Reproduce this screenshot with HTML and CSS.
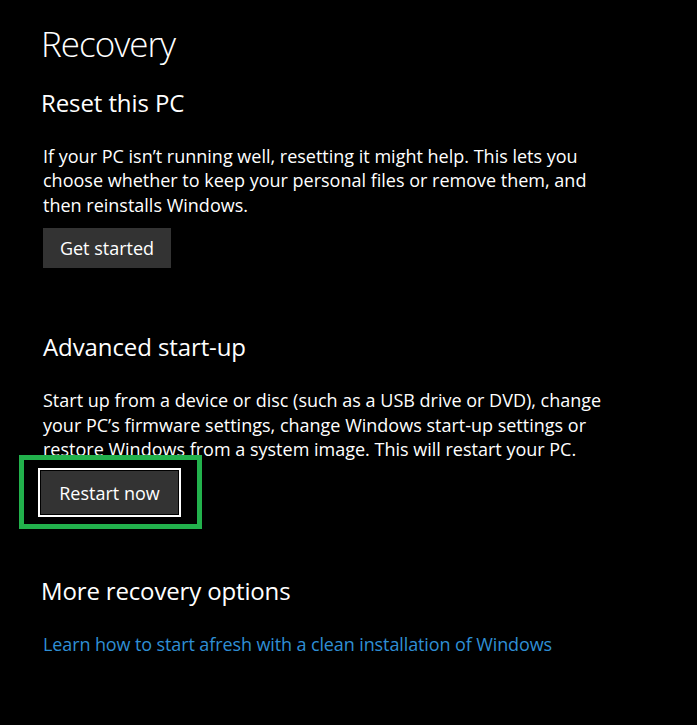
FILE: index.html
```html
<!DOCTYPE html>
<html lang="en">
<head>
<meta charset="utf-8">
<title>Recovery</title>
<link rel="stylesheet" href="styles.css">
</head>
<body>
<main class="page">
  <h1 class="title">Recovery</h1>

  <section class="section">
    <h2 class="heading heading-first">Reset this PC</h2>
    <p class="text">If your PC isn’t running well, resetting it might help. This lets you choose whether to keep your personal files or remove them, and then reinstalls Windows.</p>
    <button class="btn btn-get">Get started</button>
  </section>

  <section class="section">
    <h2 class="heading heading-adv">Advanced start-up</h2>
    <p class="text">Start up from a device or disc (such as a USB drive or DVD), change your PC’s firmware settings, change Windows start-up settings or restore Windows from a system image. This will restart your PC.</p>
    <div class="focus-wrap">
      <button class="btn btn-focus">Restart now</button>
      <span class="highlight"></span>
    </div>
  </section>

  <section class="section">
    <h2 class="heading heading-more">More recovery options</h2>
    <a class="link" href="#">Learn how to start afresh with a clean installation of Windows</a>
  </section>
</main>
</body>
</html>
```

FILE: styles.css
```css
html, body {
  margin: 0;
  padding: 0;
  background: #000;
  color: #fff;
  font-family: "Open Sans", "Noto Sans", sans-serif;
}

.page {
  width: 697px;
  height: 725px;
  padding: 19px 0 0 41px;
  box-sizing: border-box;
  overflow: hidden;
}

.title {
  margin: 0;
  font-size: 35px;
  font-weight: 300;
  line-height: 50px;
  letter-spacing: -1px;
}

.section {
  display: flex;
  flex-direction: column;
  align-items: flex-start;
}

.heading {
  margin: 0;
  font-size: 24px;
  font-weight: 400;
  line-height: 34px;
  letter-spacing: -0.1px;
}

.heading-first {
  margin-top: 17px;
}

.heading-adv {
  margin-top: 62px;
  margin-left: 2px;
}

.heading-more {
  margin-top: 57px;
  letter-spacing: -0.15px;
}

.text {
  margin: 24px 0 0 2px;
  width: 560px;
  font-size: 18px;
  line-height: 24.4px;
}

.btn {
  display: block;
  height: 40px;
  padding: 0;
  border: 0;
  background: #333;
  color: #fff;
  font-family: inherit;
  font-size: 18px;
  text-align: center;
}

.btn-get {
  width: 128px;
  margin: 11px 0 0 2px;
}

.focus-wrap {
  position: relative;
  margin: 7px 0 0 -3px;
}

.btn-focus {
  width: 143px;
  height: 49px;
  border: 2px solid #fff;
  box-shadow: inset 0 0 0 1px #000;
}

.highlight {
  position: absolute;
  left: -19px;
  top: -13px;
  right: -21px;
  bottom: -12px;
  border: 5px solid #22b14c;
  pointer-events: none;
}

.link {
  display: block;
  margin: 24px 0 0 2px;
  color: #2f8fd5;
  font-size: 18px;
  line-height: 24.4px;
  letter-spacing: -0.11px;
  text-decoration: none;
}
```
